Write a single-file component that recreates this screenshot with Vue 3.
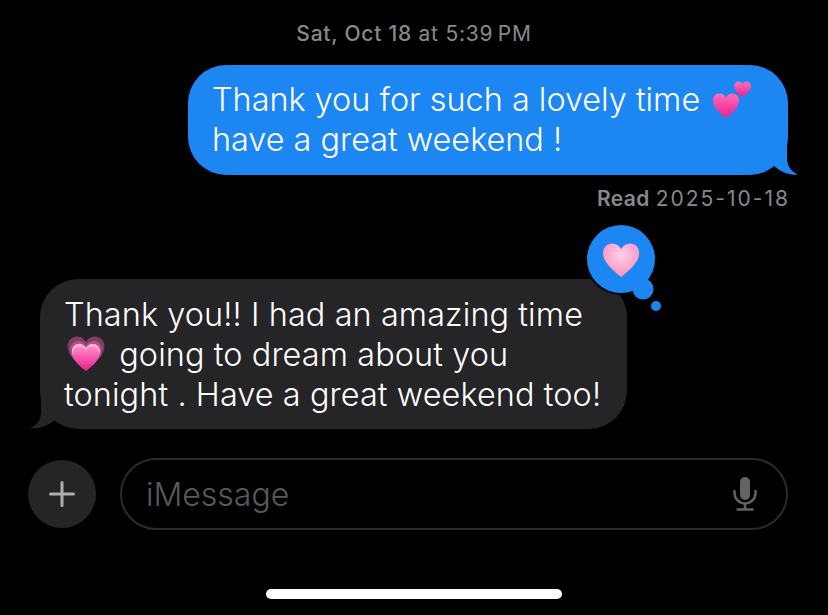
<template>
  <div class="screen">
    <div class="thread">
      <p class="stamp"><b>Sat, Oct 18</b> at 5:39&#8201;PM</p>

      <div class="row sent-row">
        <div class="bubble sent">
          Thank you for such a lovely time
          <svg class="emoji two-hearts" viewBox="0 0 38 38">
            <defs>
              <linearGradient id="hot" x1="0" y1="0" x2="0" y2="1">
                <stop offset="0" stop-color="#ff6fbb" />
                <stop offset="1" stop-color="#ea1f8e" />
              </linearGradient>
            </defs>
            <path :d="heart" fill="url(#hot)" transform="translate(20 1) scale(.8)" />
            <path :d="heart" fill="url(#hot)" transform="translate(-2 12) scale(1.25)" />
          </svg>
          <br />have a great weekend !
          <svg class="tail tail-sent" viewBox="0 0 36 40">
            <path d="M0 5H24V25Q25 35 35 40Q21 40 11 31L0 20Z" />
          </svg>
        </div>
      </div>

      <p class="receipt"><b>Read</b> <span>2025-10-18</span></p>

      <div class="row received-row">
        <div class="bubble received">
          Thank you!! I had an amazing time<br />
          <svg class="emoji growing" viewBox="0 0 40 38">
            <defs>
              <linearGradient id="grow" x1="0" y1="0" x2="0" y2="1">
                <stop offset="0" stop-color="#ff8cca" />
                <stop offset="1" stop-color="#e91e8c" />
              </linearGradient>
            </defs>
            <path :d="heart" fill="#7d3f66" transform="translate(-1 -2) scale(1.75)" />
            <path :d="heart" fill="#b0508a" transform="translate(2 3) scale(1.5)" />
            <path :d="heart" fill="#ffb3dc" transform="translate(4 6) scale(1.33)" />
            <path :d="heart" fill="url(#grow)" transform="translate(5 9) scale(1.25)" />
          </svg>
          going to dream about you<br />
          tonight . Have a great weekend too!
          <svg class="tail tail-received" viewBox="0 0 36 40">
            <path d="M36 5H12V25Q11 35 1 39Q15 40 25 32L36 20Z" />
          </svg>
          <svg class="tapback" viewBox="0 0 84 92">
            <circle cx="36" cy="36" r="36" fill="#000" />
            <circle cx="58" cy="66" r="12" fill="#000" />
            <circle cx="36" cy="36" r="34" fill="#1c86f2" />
            <circle cx="58" cy="66" r="10.5" fill="#1c86f2" />
            <circle cx="71" cy="83" r="5" fill="#1c86f2" />
            <defs>
              <radialGradient id="soft" cx=".5" cy=".35" r=".7">
                <stop offset="0" stop-color="#ffd2e6" />
                <stop offset="1" stop-color="#ff86bf" />
              </radialGradient>
            </defs>
            <path :d="heart" fill="url(#soft)" transform="translate(15.500 17) scale(1.72)" />
          </svg>
        </div>
      </div>

      <div class="composer">
        <button class="plus">
          <svg viewBox="0 0 28 28" width="28" height="28">
            <path d="M14 2.500V25.500M2.500 14H25.500" />
          </svg>
        </button>
        <div class="field">
          <span>iMessage</span>
          <svg class="mic" viewBox="0 0 24 34" width="24" height="34">
            <rect x="7" y="0" width="10" height="23" rx="5" fill="#636366" />
            <path d="M1.500 14V16A10.500 10.500 0 0 0 22.500 16V14M12 27V32M4.500 32.500H19.500" />
          </svg>
        </div>
      </div>
    </div>

    <div class="home-bar"></div>
  </div>
</template>

<script setup>
// shared outline for every heart emoji, drawn in a 24-unit box
const heart =
  'M12 21.5C5 16 1.5 12 1.5 7.500 1.500 4.200 4 2 6.800 2 9 2 11 3.200 12 5.200 13 3.200 15 2 17.200 2 20 2 22.500 4.200 22.500 7.500 22.500 12 19 16 12 21.500Z'
</script>

<style>
html, body { background: #000; }
</style>

<style scoped>
.screen {
  width: 828px;
  height: 615px;
  background: #000;
  color: #fff;
  font-family: Inter, "Liberation Sans", sans-serif;
  display: flex;
  flex-direction: column;
  overflow: hidden;
}

.thread {
  flex: 1;
  padding: 22px 40px 0 28px;
}

.stamp {
  margin: 0;
  padding-left: 12px;
  text-align: center;
  font-size: 21px;
  line-height: 24px;
  letter-spacing: .75px;
  color: #88888c;
}
.stamp b { font-weight: 500; }

.row { display: flex; }
.sent-row { justify-content: flex-end; margin-top: 19px; }
.received-row { margin: 68px 0 0 12px; }

.bubble {
  position: relative;
  border-radius: 38px;
  font-size: 32.400px;
  font-weight: 350;
  line-height: 40px;
  white-space: nowrap;
}
.sent {
  width: 600px;
  height: 110px;
  padding: 15px 0 0 24px;
  background: #1c86f2;
  box-sizing: border-box;
}
.received {
  width: 587px;
  height: 150px;
  padding: 16px 0 0 24px;
  background: #252527;
  box-sizing: border-box;
  letter-spacing: .1px;
}

.emoji {
  display: inline-block;
  vertical-align: middle;
  overflow: visible;
}
.two-hearts { width: 38px; height: 38px; margin: -8px 0 0 4px; }
.growing { width: 40px; height: 38px; margin: -6px 4px 0 2px; }

.tail {
  position: absolute;
  bottom: 0;
  width: 36px;
  height: 40px;
}
.tail-sent { right: -11px; fill: #1c86f2; }
.tail-received { left: -11px; fill: #252527; }

.tapback {
  position: absolute;
  left: 545px;
  top: -56px;
  width: 84px;
  height: 92px;
}

.receipt {
  margin: 12px 0 0;
  text-align: right;
  font-size: 21px;
  line-height: 24px;
  color: #88888c;
}
.receipt b { font-weight: 600; letter-spacing: .4px; }
.receipt span { letter-spacing: 2px; margin-right: -2px; }

.composer {
  display: flex;
  align-items: center;
  gap: 24px;
  margin-top: 29px;
}
.plus {
  width: 68px;
  height: 68px;
  flex: none;
  padding: 0;
  border: none;
  border-radius: 50%;
  background: #252527;
  display: flex;
  align-items: center;
  justify-content: center;
}
.plus path {
  fill: none;
  stroke: #aeaeb0;
  stroke-width: 3;
  stroke-linecap: round;
}
.field {
  flex: 1;
  height: 72px;
  box-sizing: border-box;
  border: 2px solid #2b2b2d;
  border-radius: 36px;
  padding: 0 29px 0 24px;
  display: flex;
  align-items: center;
  justify-content: space-between;
  font-size: 32px;
  font-weight: 350;
  color: #59595c;
}
.mic path {
  fill: none;
  stroke: #636366;
  stroke-width: 2.500;
  stroke-linecap: round;
}

.home-bar {
  align-self: center;
  width: 296px;
  height: 10px;
  margin-bottom: 16px;
  border-radius: 5px;
  background: #fff;
}
</style>
